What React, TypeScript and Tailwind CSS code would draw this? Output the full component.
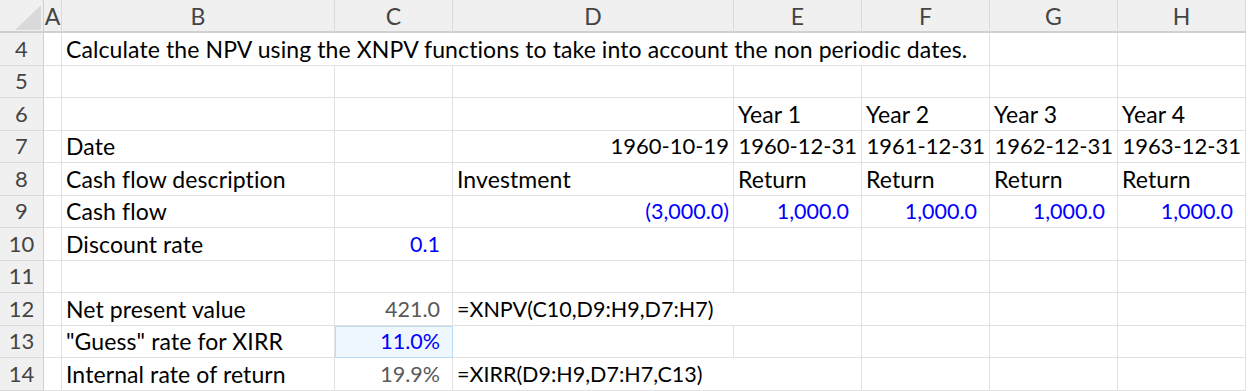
import React from "react";

type Cell = {
  v: string;
  col: number; // 1 = A ... 8 = H
  span?: number;
  align?: "left" | "right";
  tone?: "blue" | "gray";
  paren?: boolean; // number formats keep room for a ")"
  hl?: boolean;
  size?: "date" | "num";
};

const COLS = ["A", "B", "C", "D", "E", "F", "G", "H"];

const rows: { n: number; cells: Cell[] }[] = [
  {
    n: 4,
    cells: [
      {
        v: "Calculate the NPV using the XNPV functions to take into account the non periodic dates.",
        col: 2,
        span: 5,
      },
    ],
  },
  { n: 5, cells: [] },
  {
    n: 6,
    cells: [
      { v: "Year 1", col: 5 },
      { v: "Year 2", col: 6 },
      { v: "Year 3", col: 7 },
      { v: "Year 4", col: 8 },
    ],
  },
  {
    n: 7,
    cells: [
      { v: "Date", col: 2 },
      { v: "1960-10-19", col: 4, align: "right", size: "date" },
      { v: "1960-12-31", col: 5, align: "right", size: "date" },
      { v: "1961-12-31", col: 6, align: "right", size: "date" },
      { v: "1962-12-31", col: 7, align: "right", size: "date" },
      { v: "1963-12-31", col: 8, align: "right", size: "date" },
    ],
  },
  {
    n: 8,
    cells: [
      { v: "Cash flow description", col: 2 },
      { v: "Investment", col: 4 },
      { v: "Return", col: 5 },
      { v: "Return", col: 6 },
      { v: "Return", col: 7 },
      { v: "Return", col: 8 },
    ],
  },
  {
    n: 9,
    cells: [
      { v: "Cash flow", col: 2 },
      { v: "(3,000.0)", col: 4, align: "right", tone: "blue", size: "num" },
      { v: "1,000.0", col: 5, align: "right", tone: "blue", paren: true, size: "num" },
      { v: "1,000.0", col: 6, align: "right", tone: "blue", paren: true, size: "num" },
      { v: "1,000.0", col: 7, align: "right", tone: "blue", paren: true, size: "num" },
      { v: "1,000.0", col: 8, align: "right", tone: "blue", paren: true, size: "num" },
    ],
  },
  {
    n: 10,
    cells: [
      { v: "Discount rate", col: 2 },
      { v: "0.1", col: 3, align: "right", tone: "blue", paren: true, size: "num" },
    ],
  },
  { n: 11, cells: [] },
  {
    n: 12,
    cells: [
      { v: "Net present value", col: 2 },
      { v: "421.0", col: 3, align: "right", tone: "gray", paren: true, size: "num" },
      { v: "=XNPV(C10,D9:H9,D7:H7)", col: 4, span: 2, size: "num" },
    ],
  },
  {
    n: 13,
    cells: [
      { v: '"Guess" rate for XIRR', col: 2 },
      { v: "11.0%", col: 3, align: "right", tone: "blue", paren: true, hl: true, size: "num" },
    ],
  },
  {
    n: 14,
    cells: [
      { v: "Internal rate of return", col: 2 },
      { v: "19.9%", col: 3, align: "right", tone: "gray", paren: true, size: "num" },
      { v: "=XIRR(D9:H9,D7:H7,C13)", col: 4, span: 2, size: "num" },
    ],
  },
];

const toneClass = (t?: Cell["tone"]) =>
  t === "blue" ? "text-[#0000ff]" : t === "gray" ? "text-[#595959]" : "text-black";

const sizeClass = (s?: Cell["size"]) =>
  s === "date" ? "text-[22px] tracking-normal" : s === "num" ? "text-[21.5px] tracking-normal" : "";

function DataCell({ cell }: { cell: Cell }) {
  const span =
    cell.span === 5 ? "col-span-5" : cell.span === 2 ? "col-span-2" : "col-span-1";
  return (
    <div
      className={`${span} flex items-end overflow-visible whitespace-nowrap border-b border-r border-[#e1e1e1] pb-[2px] leading-[28px] ${
        cell.align === "right" ? "justify-end" : "justify-start pl-[4px]"
      } ${cell.align === "right" ? (cell.paren ? "pr-[12px]" : "pr-[4px]") : ""} ${toneClass(
        cell.tone
      )} ${sizeClass(cell.size)} ${
        cell.hl ? "bg-[#eef6fe] outline outline-1 -outline-offset-1 outline-[#bcdcf6]" : "bg-white"
      }`}
    >
      {cell.v}
    </div>
  );
}

function EmptyCell() {
  return <div className="border-b border-r border-[#e1e1e1] bg-white" />;
}

export default function App() {
  return (
    <div
      className="w-[1248px] h-[391px] overflow-hidden bg-white text-[23px] tracking-[0.1px]"
      style={{ fontFamily: "Lato, 'Open Sans', sans-serif" }}
    >
      <div className="grid grid-cols-[44px_18px_273px_118px_281px_128px_128px_128px_128px] grid-rows-[33px_repeat(11,32.5px)]">
        {/* corner */}
        <div className="relative border-b-2 border-r border-[#d0d0d0] bg-[#f0f0f0]">
          <svg className="absolute left-0 top-0" width="44" height="33" viewBox="0 0 44 33">
            <polygon points="15,30 41,30 41,5" fill="#d9d9d9" />
          </svg>
        </div>
        {COLS.map((c) => (
          <div
            key={c}
            className="flex items-end justify-center border-b-2 border-r border-b-[#d0d0d0] border-r-[#dadada] bg-[#f0f0f0] pb-[1px] leading-[28px] text-[#444444]"
          >
            {c}
          </div>
        ))}

        {rows.map((row) => {
          const out: React.ReactNode[] = [
            <div
              key={`h${row.n}`}
              className="flex items-end justify-center border-b border-r border-b-[#dadada] border-r-[#d0d0d0] bg-[#f0f0f0] pb-[2px] text-[22px] leading-[28px] text-[#444444]"
            >
              {row.n}
            </div>,
          ];
          let col = 1;
          while (col <= 8) {
            const cell = row.cells.find((c) => c.col === col);
            if (cell) {
              out.push(<DataCell key={`${row.n}-${col}`} cell={cell} />);
              col += cell.span ?? 1;
            } else {
              out.push(<EmptyCell key={`${row.n}-${col}`} />);
              col += 1;
            }
          }
          return <React.Fragment key={row.n}>{out}</React.Fragment>;
        })}
      </div>
    </div>
  );
}
